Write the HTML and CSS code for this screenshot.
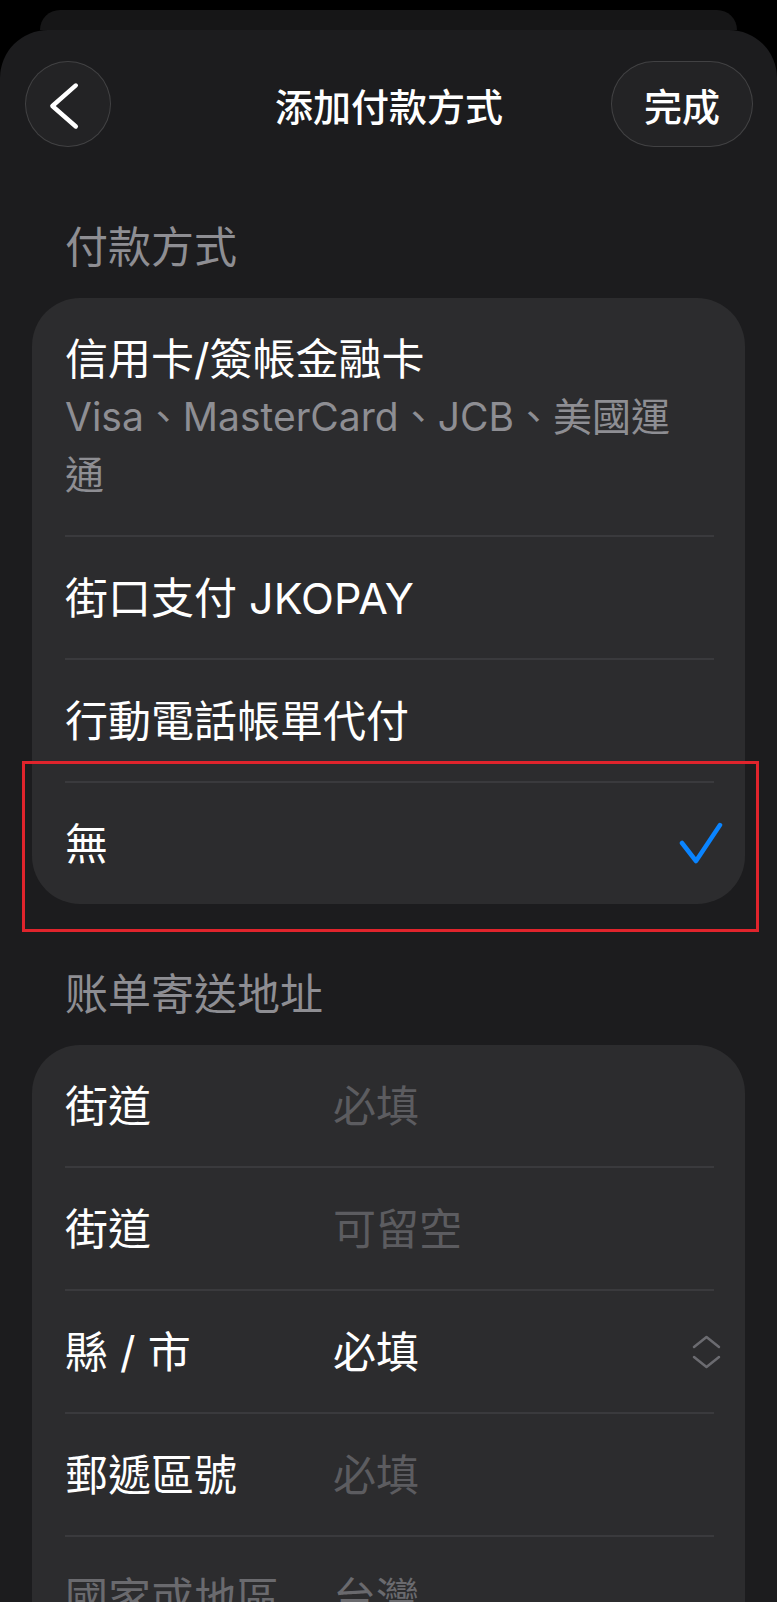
FILE: index.html
```html
<!DOCTYPE html>
<html lang="zh-Hant">
<head>
    <meta charset="UTF-8">
    <meta name="viewport" content="width=device-width, initial-scale=1.0">
    <title>添加付款方式</title>
    <link rel="stylesheet" href="styles.css">
</head>
<body>
    <div class="sheet-back"></div>
    <div class="sheet">
        <header class="nav">
            <button class="nav-btn nav-back" aria-label="返回">
                <svg width="86" height="86" viewBox="0 0 86 86">
                    <path d="M51 23 L27 44 L51 65" fill="none" stroke="#fff" stroke-width="4.5" stroke-linecap="round" stroke-linejoin="round"/>
                </svg>
            </button>
            <h1 class="nav-title">添加付款方式</h1>
            <button class="nav-btn nav-done">完成</button>
        </header>

        <section class="group group-first">
            <h2 class="group-title">付款方式</h2>
            <div class="card">
                <div class="row">
                    <div class="option-text">
                        <div class="option-name">信用卡/簽帳金融卡</div>
                        <div class="option-desc">Visa、MasterCard、JCB、美國運通</div>
                    </div>
                </div>
                <div class="row">
                    <div class="option-name">街口支付 JKOPAY</div>
                </div>
                <div class="row">
                    <div class="option-name">行動電話帳單代付</div>
                </div>
                <div class="row">
                    <div class="option-name">無</div>
                    <svg class="check" width="44" height="44" viewBox="0 0 44 44">
                        <path d="M3 21 L17 39 L41 3" fill="none" stroke="#0a84ff" stroke-width="4.5" stroke-linecap="round" stroke-linejoin="round"/>
                    </svg>
                </div>
            </div>
        </section>

        <section class="group">
            <h2 class="group-title">账单寄送地址</h2>
            <div class="card">
                <div class="row field">
                    <span class="field-label">街道</span>
                    <span class="field-value placeholder">必填</span>
                </div>
                <div class="row field">
                    <span class="field-label">街道</span>
                    <span class="field-value placeholder">可留空</span>
                </div>
                <div class="row field">
                    <span class="field-label">縣 / 市</span>
                    <span class="field-value">必填</span>
                    <svg class="updown" width="33" height="38" viewBox="0 0 33 38">
                        <path d="M4 14 L16.5 4 L29 14 M4 24 L16.5 34 L29 24" fill="none" stroke="#6b6b70" stroke-width="2.5" stroke-linecap="round" stroke-linejoin="round"/>
                    </svg>
                </div>
                <div class="row field">
                    <span class="field-label">郵遞區號</span>
                    <span class="field-value placeholder">必填</span>
                </div>
                <div class="row field disabled">
                    <span class="field-label">國家或地區</span>
                    <span class="field-value">台灣</span>
                </div>
            </div>
        </section>
    </div>

    <!-- annotation frame around the selected option -->
    <div class="highlight"></div>
</body>
</html>
```

FILE: styles.css
```css
body {
    margin: 0;
    height: 1602px;
    overflow: hidden;
    background: #000;
    color: #fff;
    font-family: "Inter", "Noto Sans CJK TC", sans-serif;
    position: relative;
}
.sheet-back {
    margin: 10px 40px 0;
    height: 20px;
    background: #161617;
    border-radius: 40px 40px 0 0;
}
.sheet {
    background: #1c1c1e;
    border-radius: 48px 48px 0 0;
    min-height: 1572px;
}

/* navigation bar */
.nav {
    display: grid;
    grid-template-columns: 1fr auto 1fr;
    align-items: center;
    padding: 31px 24px 0 25px;
}
.nav-btn {
    height: 86px;
    background: rgba(255, 255, 255, 0.03);
    border: 1.5px solid rgba(255, 255, 255, 0.14);
    color: #fff;
    font-family: inherit;
    padding: 0;
    box-sizing: border-box;
}
.nav-back {
    width: 86px;
    border-radius: 50%;
    justify-self: start;
    display: flex;
}
.nav-done {
    width: 142px;
    border-radius: 43px;
    justify-self: end;
    font-size: 38px;
    font-weight: 500;
}
.nav-title {
    margin: 0;
    font-size: 38px;
    font-weight: 500;
}

/* grouped lists */
.group {
    margin-top: 62px;
}
.group-first {
    margin-top: 72px;
}
.group-title {
    margin: 0 0 23px;
    padding-left: 65px;
    font-size: 43px;
    line-height: 56px;
    font-weight: 400;
    color: #8e8e93;
}
.card {
    margin: 0 32px;
    background: #2c2c2e;
    border-radius: 48px;
    overflow: hidden;
}
.row {
    display: flex;
    align-items: center;
    margin: 0 31px 0 33px;
    padding: 32px 0 31px;
    font-size: 43px;
    line-height: 58px;
}
.row + .row {
    border-top: 2px solid #3a3a3d;
}
.option-name {
    flex: 1;
}
.option-desc {
    font-size: 39px;
    color: #8e8e93;
    padding-right: 24px;
}
.check {
    margin-right: -9px;
}

/* address fields */
.field-label {
    width: 268px;
    flex-shrink: 0;
}
.field-value {
    flex: 1;
}
.placeholder {
    color: #5c5c60;
}
.updown {
    margin-right: -9px;
}
.disabled {
    color: #6a6a6e;
}

.highlight {
    position: absolute;
    left: 22px;
    top: 761px;
    width: 737px;
    height: 171px;
    box-sizing: border-box;
    border: 3px solid #e0242c;
}
```
